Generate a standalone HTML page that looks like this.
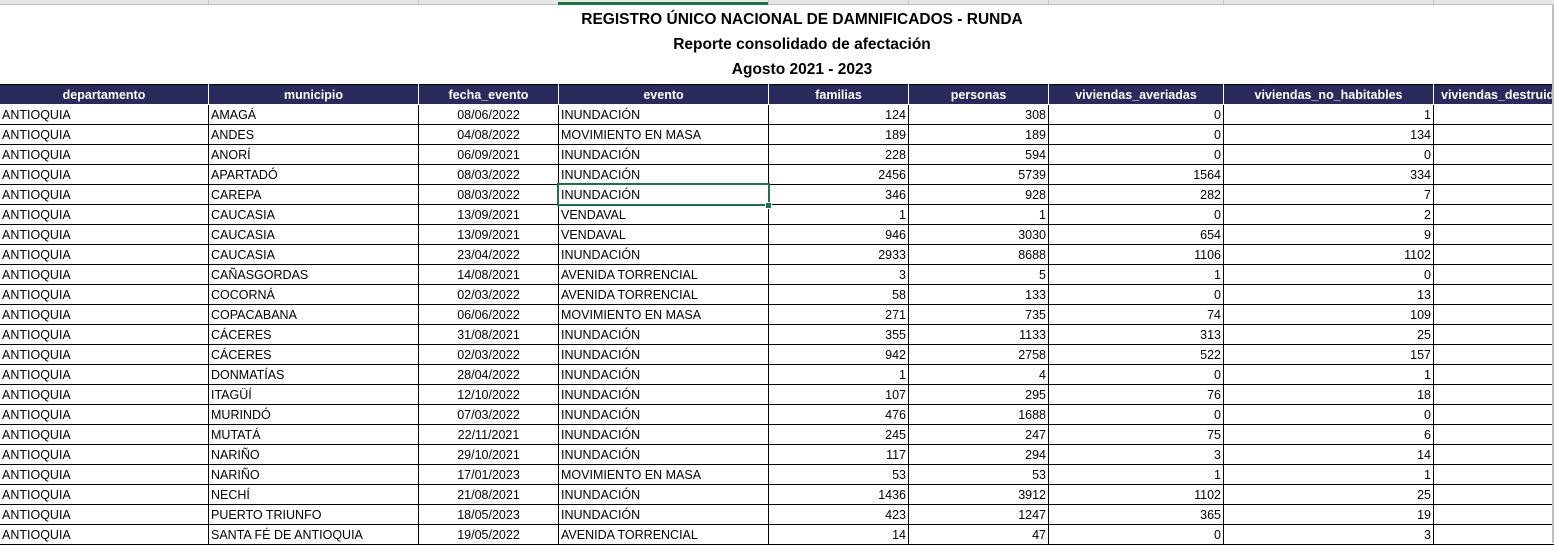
<!DOCTYPE html><html><head><meta charset="utf-8"><style>
body{margin:0;width:1554px;height:543px;overflow:hidden;background:#fff;font-family:"Liberation Sans",sans-serif;position:relative}
.top{position:absolute;left:0;top:0;width:1554px;height:4px;background:#e6e6e6;border-bottom:1px solid #bdbdbd}
.tl{position:absolute;top:0;height:4px;width:1px;background:#c8c8c8}
.t{position:absolute;left:0;width:1604px;text-align:center;font-weight:bold;font-size:15.5px;color:#000}
table{position:absolute;left:-1px;top:84px;width:1654px;border-collapse:collapse;table-layout:fixed;font-size:12.5px}
td{height:19px;padding:2px 2px 0 2px;box-sizing:border-box;border:1px solid #000;white-space:nowrap;overflow:hidden;line-height:17px}
tr.h td{background:#2a2a5c;color:#fff;font-weight:bold;text-align:center;border-color:#fff;border-top:1px solid #000}
tr.h td.l{text-align:left;padding-left:7px}
td.r{text-align:right}td.c{text-align:center}
.rb{position:absolute;left:1552px;top:4px;width:2px;height:539px;background:#bfbfbf}
.sel{position:absolute;left:558px;top:184px;width:209px;height:19px;border:2px solid #217346;box-sizing:content-box;margin:-1px}
</style></head><body>
<div class="top"></div>
<div class="tl" style="left:208px"></div><div class="tl" style="left:418px"></div><div class="tl" style="left:768px"></div><div class="tl" style="left:908px"></div><div class="tl" style="left:1048px"></div><div class="tl" style="left:1223px"></div><div class="tl" style="left:1433px"></div>
<div style="position:absolute;left:558px;top:2px;width:210px;height:3px;background:#217346"></div>
<div class="t" style="top:11px">REGISTRO ÚNICO NACIONAL DE DAMNIFICADOS - RUNDA</div>
<div class="t" style="top:36px">Reporte consolidado de afectación</div>
<div class="t" style="top:61px">Agosto 2021 - 2023</div>
<table>
<colgroup><col style="width:209px"><col style="width:210px"><col style="width:140px"><col style="width:210px"><col style="width:140px"><col style="width:140px"><col style="width:175px"><col style="width:210px"><col style="width:220px"></colgroup>
<tr class="h"><td>departamento</td><td>municipio</td><td>fecha_evento</td><td>evento</td><td>familias</td><td>personas</td><td>viviendas_averiadas</td><td>viviendas_no_habitables</td><td class="l">viviendas_destruidas</td></tr>
<tr><td>ANTIOQUIA</td><td>AMAGÁ</td><td class="c">08/06/2022</td><td>INUNDACIÓN</td><td class="r">124</td><td class="r">308</td><td class="r">0</td><td class="r">1</td><td></td></tr>
<tr><td>ANTIOQUIA</td><td>ANDES</td><td class="c">04/08/2022</td><td>MOVIMIENTO EN MASA</td><td class="r">189</td><td class="r">189</td><td class="r">0</td><td class="r">134</td><td></td></tr>
<tr><td>ANTIOQUIA</td><td>ANORÍ</td><td class="c">06/09/2021</td><td>INUNDACIÓN</td><td class="r">228</td><td class="r">594</td><td class="r">0</td><td class="r">0</td><td></td></tr>
<tr><td>ANTIOQUIA</td><td>APARTADÓ</td><td class="c">08/03/2022</td><td>INUNDACIÓN</td><td class="r">2456</td><td class="r">5739</td><td class="r">1564</td><td class="r">334</td><td></td></tr>
<tr><td>ANTIOQUIA</td><td>CAREPA</td><td class="c">08/03/2022</td><td>INUNDACIÓN</td><td class="r">346</td><td class="r">928</td><td class="r">282</td><td class="r">7</td><td></td></tr>
<tr><td>ANTIOQUIA</td><td>CAUCASIA</td><td class="c">13/09/2021</td><td>VENDAVAL</td><td class="r">1</td><td class="r">1</td><td class="r">0</td><td class="r">2</td><td></td></tr>
<tr><td>ANTIOQUIA</td><td>CAUCASIA</td><td class="c">13/09/2021</td><td>VENDAVAL</td><td class="r">946</td><td class="r">3030</td><td class="r">654</td><td class="r">9</td><td></td></tr>
<tr><td>ANTIOQUIA</td><td>CAUCASIA</td><td class="c">23/04/2022</td><td>INUNDACIÓN</td><td class="r">2933</td><td class="r">8688</td><td class="r">1106</td><td class="r">1102</td><td></td></tr>
<tr><td>ANTIOQUIA</td><td>CAÑASGORDAS</td><td class="c">14/08/2021</td><td>AVENIDA TORRENCIAL</td><td class="r">3</td><td class="r">5</td><td class="r">1</td><td class="r">0</td><td></td></tr>
<tr><td>ANTIOQUIA</td><td>COCORNÁ</td><td class="c">02/03/2022</td><td>AVENIDA TORRENCIAL</td><td class="r">58</td><td class="r">133</td><td class="r">0</td><td class="r">13</td><td></td></tr>
<tr><td>ANTIOQUIA</td><td>COPACABANA</td><td class="c">06/06/2022</td><td>MOVIMIENTO EN MASA</td><td class="r">271</td><td class="r">735</td><td class="r">74</td><td class="r">109</td><td></td></tr>
<tr><td>ANTIOQUIA</td><td>CÁCERES</td><td class="c">31/08/2021</td><td>INUNDACIÓN</td><td class="r">355</td><td class="r">1133</td><td class="r">313</td><td class="r">25</td><td></td></tr>
<tr><td>ANTIOQUIA</td><td>CÁCERES</td><td class="c">02/03/2022</td><td>INUNDACIÓN</td><td class="r">942</td><td class="r">2758</td><td class="r">522</td><td class="r">157</td><td></td></tr>
<tr><td>ANTIOQUIA</td><td>DONMATÍAS</td><td class="c">28/04/2022</td><td>INUNDACIÓN</td><td class="r">1</td><td class="r">4</td><td class="r">0</td><td class="r">1</td><td></td></tr>
<tr><td>ANTIOQUIA</td><td>ITAGÜÍ</td><td class="c">12/10/2022</td><td>INUNDACIÓN</td><td class="r">107</td><td class="r">295</td><td class="r">76</td><td class="r">18</td><td></td></tr>
<tr><td>ANTIOQUIA</td><td>MURINDÓ</td><td class="c">07/03/2022</td><td>INUNDACIÓN</td><td class="r">476</td><td class="r">1688</td><td class="r">0</td><td class="r">0</td><td></td></tr>
<tr><td>ANTIOQUIA</td><td>MUTATÁ</td><td class="c">22/11/2021</td><td>INUNDACIÓN</td><td class="r">245</td><td class="r">247</td><td class="r">75</td><td class="r">6</td><td></td></tr>
<tr><td>ANTIOQUIA</td><td>NARIÑO</td><td class="c">29/10/2021</td><td>INUNDACIÓN</td><td class="r">117</td><td class="r">294</td><td class="r">3</td><td class="r">14</td><td></td></tr>
<tr><td>ANTIOQUIA</td><td>NARIÑO</td><td class="c">17/01/2023</td><td>MOVIMIENTO EN MASA</td><td class="r">53</td><td class="r">53</td><td class="r">1</td><td class="r">1</td><td></td></tr>
<tr><td>ANTIOQUIA</td><td>NECHÍ</td><td class="c">21/08/2021</td><td>INUNDACIÓN</td><td class="r">1436</td><td class="r">3912</td><td class="r">1102</td><td class="r">25</td><td></td></tr>
<tr><td>ANTIOQUIA</td><td>PUERTO TRIUNFO</td><td class="c">18/05/2023</td><td>INUNDACIÓN</td><td class="r">423</td><td class="r">1247</td><td class="r">365</td><td class="r">19</td><td></td></tr>
<tr><td>ANTIOQUIA</td><td>SANTA FÉ DE ANTIOQUIA</td><td class="c">19/05/2022</td><td>AVENIDA TORRENCIAL</td><td class="r">14</td><td class="r">47</td><td class="r">0</td><td class="r">3</td><td></td></tr>
</table>
<div class="sel"></div>
<div style="position:absolute;left:765px;top:202px;width:5px;height:5px;background:#217346;border:1px solid #fff"></div>
<div class="rb"></div>
</body></html>
